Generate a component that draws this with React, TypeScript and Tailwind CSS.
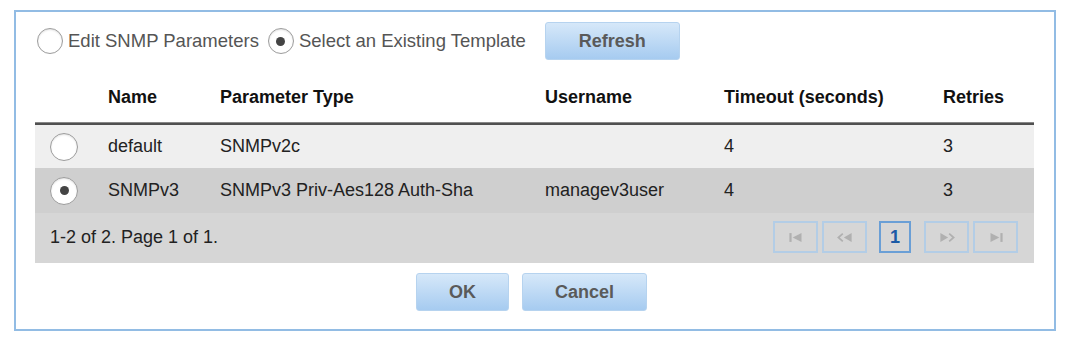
import React from 'react';

interface Template {
  name: string;
  type: string;
  username: string;
  timeout: number;
  retries: number;
}

const templates: Template[] = [
  { name: 'default', type: 'SNMPv2c', username: '', timeout: 4, retries: 3 },
  { name: 'SNMPv3', type: 'SNMPv3 Priv-Aes128 Auth-Sha', username: 'managev3user', timeout: 4, retries: 3 },
];

const cols = 'grid grid-cols-[73px_112px_325px_179px_219px_1fr]';

const Radio: React.FC<{ checked?: boolean; size?: 'sm' | 'md' }> = ({ checked, size = 'md' }) => (
  <span
    className={`flex items-center justify-center rounded-full border-[1.5px] border-[#9c9c9c] bg-white shadow-[inset_0_1px_2px_rgba(0,0,0,0.12)] ${
      size === 'sm' ? 'w-[26px] h-[26px]' : 'w-[28px] h-[28px]'
    }`}
  >
    {checked && <span className="w-[9px] h-[9px] rounded-full bg-[#444]" />}
  </span>
);

const BlueButton: React.FC<{ label: string; width: string }> = ({ label, width }) => (
  <button
    className={`${width} h-[38px] rounded-[3px] border border-[#b6d3ef] bg-gradient-to-b from-[#d6e8f9] to-[#a6cbf0] text-[18px] font-bold text-[#5a5a5a]`}
  >
    {label}
  </button>
);

const PagerIcon: React.FC<{ kind: 'first' | 'prev' | 'next' | 'last' }> = ({ kind }) => {
  const c = '#b0b0b0';
  return (
    <svg width="18" height="11" viewBox="0 0 16 10">
      {kind === 'first' && (
        <>
          <rect x="2" y="1" width="2" height="8" fill={c} />
          <polygon points="13,1 13,9 5,5" fill={c} />
        </>
      )}
      {kind === 'prev' && (
        <>
          <polyline points="6,1.5 2,5 6,8.5" fill="none" stroke={c} strokeWidth="1.6" />
          <polygon points="14,1 14,9 7,5" fill={c} />
        </>
      )}
      {kind === 'next' && (
        <>
          <polygon points="2,1 2,9 9,5" fill={c} />
          <polyline points="10,1.5 14,5 10,8.5" fill="none" stroke={c} strokeWidth="1.6" />
        </>
      )}
      {kind === 'last' && (
        <>
          <polygon points="3,1 3,9 11,5" fill={c} />
          <rect x="12" y="1" width="2" height="8" fill={c} />
        </>
      )}
    </svg>
  );
};

const PagerButton: React.FC<{ kind: 'first' | 'prev' | 'next' | 'last' }> = ({ kind }) => (
  <div className="w-[45px] h-[32px] flex items-center justify-center border-2 border-[#b3cde6]">
    <PagerIcon kind={kind} />
  </div>
);

export default function App() {
  return (
    <div className="w-[1066px] h-[344px] bg-white pt-[10px] pl-[14px] font-['Liberation_Sans',Arial,sans-serif]">
      <div className="w-[1042px] h-[321px] border-2 border-[#92bce4]">
        {/* Mode selector */}
        <div className="flex items-center pl-[21px] pt-[10px] h-[48px] text-[18.5px] text-[#555]">
          <Radio size="sm" />
          <span className="ml-[5px]">Edit SNMP Parameters</span>
          <span className="ml-[9px]">
            <Radio size="sm" checked />
          </span>
          <span className="ml-[5px]">Select an Existing Template</span>
          <span className="ml-[19px]">
            <BlueButton label="Refresh" width="w-[135px]" />
          </span>
        </div>

        {/* Template table */}
        <div className="ml-[19px] w-[999px]">
          <div className={`${cols} h-[62px] items-end pb-[11px] text-[18px] font-bold text-[#111]`}>
            <div />
            <div>Name</div>
            <div>Parameter Type</div>
            <div>Username</div>
            <div>Timeout (seconds)</div>
            <div>Retries</div>
          </div>
          <div className="h-[3px] bg-[#505050] border-t border-[#888]" />
          {templates.map((t, i) => (
            <div
              key={t.name}
              className={`${cols} items-center text-[18px] text-[#222] ${
                i === 0 ? 'h-[43px] bg-[#efefef]' : 'h-[45px] bg-[#cfcfcf]'
              }`}
            >
              <div className="pl-[15px]">
                <Radio checked={i === 1} />
              </div>
              <div>{t.name}</div>
              <div>{t.type}</div>
              <div>{t.username}</div>
              <div>{t.timeout}</div>
              <div>{t.retries}</div>
            </div>
          ))}
          <div className="h-[50px] bg-[#d6d6d6] flex items-center justify-between pl-[15px] pr-[16px] pb-[2px]">
            <span className="text-[18px] text-[#222]">1-2 of 2. Page 1 of 1.</span>
            <div className="flex items-center">
              <PagerButton kind="first" />
              <div className="ml-[4px]">
                <PagerButton kind="prev" />
              </div>
              <div className="ml-[12px] w-[32px] h-[32px] flex items-center justify-center border-2 border-[#6a9fd6] text-[18px] font-bold text-[#1b5aa6]">
                1
              </div>
              <div className="ml-[13px]">
                <PagerButton kind="next" />
              </div>
              <div className="ml-[4px]">
                <PagerButton kind="last" />
              </div>
            </div>
          </div>
        </div>

        {/* Actions */}
        <div className="flex justify-center gap-[13px] mt-[10px] pr-[7px]">
          <BlueButton label="OK" width="w-[93px]" />
          <BlueButton label="Cancel" width="w-[125px]" />
        </div>
      </div>
    </div>
  );
}
